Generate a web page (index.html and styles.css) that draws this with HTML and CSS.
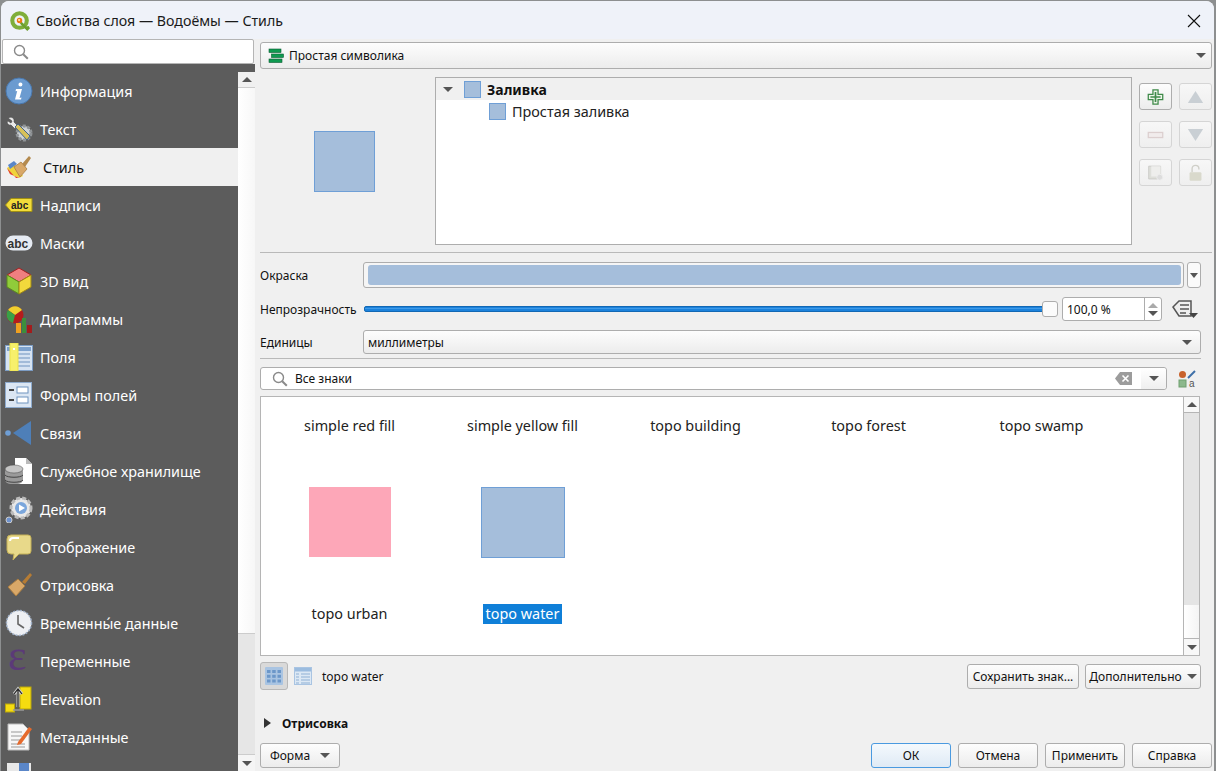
FILE: index.html
```html
<!DOCTYPE html>
<html lang="ru">
<head>
<meta charset="utf-8">
<title>Свойства слоя — Водоёмы — Стиль</title>
<link rel="stylesheet" href="styles.css">
</head>
<body>
<div class="window">
  <header class="titlebar">
    <svg class="qgis" viewBox="0 0 22 22"><circle cx="10.500" cy="10.500" r="8" fill="none" stroke="#7fae3a" stroke-width="4.500"/><path d="M12 11l6 6 2.500-.5L22 19l-3 3-8-8z" fill="#6d9f2f"/><circle cx="10.500" cy="10.500" r="3" fill="#ee7913"/><circle cx="10" cy="10" r="1.200" fill="#f5e9b0"/></svg>
    <span class="title">Свойства слоя — Водоёмы — Стиль</span>
    <svg class="close" viewBox="0 0 14 14"><path d="M1 1l12 12M13 1L1 13" stroke="#111" stroke-width="1.100" fill="none"/></svg>
  </header>
  <div class="content">
    <aside class="side">
      <div class="side-search">
        <svg class="ico-search" viewBox="0 0 16 16"><circle cx="6.500" cy="6.500" r="5" fill="none" stroke="#8a8a8a" stroke-width="1.400"/><path d="M10.200 10.200l4.600 4.600" stroke="#8a8a8a" stroke-width="2"/></svg>
      </div>
      <div class="side-body">
        <nav class="nav">
          <div class="nav-item"><svg class="nav-ico" viewBox="0 0 28 28"><circle cx="14" cy="14" r="13" fill="#6b9bd0" stroke="#4a78ad"/><path d="M15.500 5.500a2 2 0 1 1-.1 4 2 2 0 0 1 .1-4zM11 12h6l-2.500 9 2-.5-.5 2H10l2.200-8.500-1.700.2z" fill="#fff"/></svg><span>Информация</span></div>
          <div class="nav-item"><svg class="nav-ico" viewBox="0 0 28 28"><circle cx="19" cy="18" r="7" fill="#cfd3d6" stroke="#8f9396" stroke-width="3" stroke-dasharray="3 1.500"/><path d="M3 3c3-2 7 0 6 4l4 4-3 3-4-4C3 11 1 7 3 6l3 2 1-2z" fill="#e8e8e8" stroke="#444" stroke-width=".6"/><path d="M10 12l3-3 12 12-3 4z" fill="#d8c15a" stroke="#44648c"/></svg><span>Текст</span></div>
          <div class="nav-item active"><svg class="nav-ico" viewBox="0 0 28 28"><path d="M2 15l7-5 9 13-4 2-9-4z" fill="#f0d33c"/><path d="M2 15l9 10 3 0-9-4z" fill="#e33b3b"/><path d="M3 12l6-4 3 3-7 5z" fill="#5a86c8"/><path d="M17 11l7-8 2 2-6 9z" fill="#b48a4e"/><path d="M9 14l7-5 6 7-7 8z" fill="#d9a868" stroke="#a87c42" stroke-width=".8"/></svg><span>Стиль</span></div>
          <div class="nav-item"><svg class="nav-ico" viewBox="0 0 28 28"><path d="M.5 14L6 7.500h21v13H6z" fill="#f2dc3a" stroke="#a08f14"/><text x="6" y="18" class="ico-abc">abc</text></svg><span>Надписи</span></div>
          <div class="nav-item"><svg class="nav-ico" viewBox="0 0 28 28"><rect x=".5" y="6.500" width="27" height="15" rx="7.500" fill="#e6ebf3"/><text x="2.500" y="18.500" class="ico-abc dark">abc</text></svg><span>Маски</span></div>
          <div class="nav-item"><svg class="nav-ico" viewBox="0 0 28 28"><path d="M14 1l12 7-12 7L2 8z" fill="#ef7f80" stroke="#a32020"/><path d="M2 8l12 7v12L2 20z" fill="#90cc3a" stroke="#5d8a1e"/><path d="M26 8l-12 7v12l12-7z" fill="#f2d93c" stroke="#a38c14"/></svg><span>3D вид</span></div>
          <div class="nav-item"><svg class="nav-ico" viewBox="0 0 28 28"><circle cx="10" cy="10" r="8.500" fill="#b51c1c"/><path d="M10 10L3 5a8.500 8.500 0 0 1 14 0z" fill="#f0cf2e"/><path d="M10 10L3 5a8.500 8.500 0 0 0 5 13z" fill="#39a048"/><rect x="11" y="18" width="5" height="10" fill="#f0a020"/><rect x="17" y="13" width="4" height="15" fill="#3c8f3c"/><rect x="22" y="20" width="5" height="8" fill="#a31c1c"/></svg><span>Диаграммы</span></div>
          <div class="nav-item"><svg class="nav-ico" viewBox="0 0 28 28"><rect x=".5" y="2.500" width="27" height="25" fill="#d6e3f2" stroke="#7c9cc4"/><rect x="2" y="4" width="24" height="4" fill="#7ea3cf"/><path d="M13 11h12M13 15h12M13 19h12M13 23h12" stroke="#6f93bf"/><rect x="5" y="0" width="8" height="28" fill="#f7f06b" stroke="#ece24a"/><rect x="8" y="5" width="2" height="2" fill="#fff"/></svg><span>Поля</span></div>
          <div class="nav-item"><svg class="nav-ico" viewBox="0 0 28 28"><rect x=".5" y="1.500" width="26" height="25" fill="#dbe6f3" stroke="#8daacd"/><rect x="12" y="6" width="11" height="6" fill="#fff" stroke="#6f93bf"/><rect x="12" y="16" width="11" height="6" fill="#fff" stroke="#6f93bf"/><path d="M4 9h5M4 19h5" stroke="#444" stroke-width="2"/></svg><span>Формы полей</span></div>
          <div class="nav-item"><svg class="nav-ico" viewBox="0 0 28 28"><circle cx="3" cy="14" r="2.800" fill="#6f9fd6"/><path d="M8 14L26 2v24z" fill="#4e7fb8"/></svg><span>Связи</span></div>
          <div class="nav-item"><svg class="nav-ico" viewBox="0 0 28 28"><path d="M10 1h11l6 6v20H10z" fill="#fff"/><path d="M21 1v6h6z" fill="#bbb"/><rect x="0" y="10" width="18" height="17" rx="5" fill="#9a9a9a"/><ellipse cx="9" cy="12" rx="9" ry="4" fill="#c5c5c5" stroke="#444" stroke-width=".5"/><path d="M0 18c2 3 16 3 18 0M0 23c2 3 16 3 18 0" stroke="#444" fill="none"/></svg><span>Служебное хранилище</span></div>
          <div class="nav-item"><svg class="nav-ico" viewBox="0 0 28 28"><circle cx="16" cy="13" r="10" fill="#e8e8e8" stroke="#bbb" stroke-width="3" stroke-dasharray="4 2"/><circle cx="16" cy="13" r="6" fill="#7aa6dc"/><path d="M14 9.500l6 3.500-6 3.500z" fill="#fff"/><circle cx="4" cy="25" r="3" fill="#6f93cf" stroke="#ccc"/></svg><span>Действия</span></div>
          <div class="nav-item"><svg class="nav-ico" viewBox="0 0 28 28"><path d="M6 2h17a3 3 0 0 1 3 3v13a3 3 0 0 1-3 3H14l-6 6 1-6H6a4 4 0 0 1-4-4V6a4 4 0 0 1 4-4z" fill="#e8d98a" stroke="#c4b057"/><path d="M5 8c0-2 1-3 3-3h6" stroke="#fff" stroke-width="2" fill="none"/></svg><span>Отображение</span></div>
          <div class="nav-item"><svg class="nav-ico" viewBox="0 0 28 28"><path d="M17 11l8-9 2 2-7 9z" fill="#b67c34"/><path d="M3 16l10-8 7 7-9 10z" fill="#d9a868" stroke="#a87c42"/></svg><span>Отрисовка</span></div>
          <div class="nav-item"><svg class="nav-ico" viewBox="0 0 28 28"><circle cx="14" cy="14" r="12.500" fill="#eef0f4" stroke="#9fb0c8" stroke-width="1.500" stroke-dasharray="2 1.500"/><path d="M13 6v9l6 4" stroke="#666" stroke-width="1.600" fill="none"/></svg><span>Временны́е данные</span></div>
          <div class="nav-item"><svg class="nav-ico ico-visible" viewBox="0 0 28 28"><text x="3" y="23" class="ico-eps">ε</text></svg><span>Переменные</span></div>
          <div class="nav-item"><svg class="nav-ico" viewBox="0 0 28 28"><rect x="15" y="2" width="11" height="22" fill="#f5dc10" stroke="#b9a60a"/><rect x=".5" y="19" width="9" height="8" fill="#f5dc10" stroke="#b9a60a"/><path d="M8 25h11" stroke="#999" stroke-width="1.500"/><path d="M13 22V5m-4 4l4-5 4 5" stroke="#ccc" stroke-width="3" fill="none"/><path d="M13 22V5m-4 4l4-5 4 5" stroke="#222" stroke-width="1.200" fill="none"/></svg><span>Elevation</span></div>
          <div class="nav-item"><svg class="nav-ico" viewBox="0 0 28 28"><path d="M3 1h15l6 6v20H3z" fill="#f7f7f7" stroke="#bbb"/><path d="M6 9h11M6 13h11M6 17h11M6 21h14M6 24h14" stroke="#999"/><path d="M13 19l11-15 3 2-11 15-4 1z" fill="#e66a2c"/></svg><span>Метаданные</span></div>
          <div class="nav-item"><svg class="nav-ico" viewBox="0 0 28 28"><rect x="2" y="2" width="24" height="24" fill="#e8e8e8"/><rect x="14" y="2" width="10" height="8" fill="#5a86c8"/></svg><span>Зависимости</span></div>
        </nav>
        <div class="vscroll side-scroll">
          <div class="sb-btn"><i class="arrow up"></i></div>
          <div class="sb-track"></div>
          <div class="sb-thumb"></div>
          <div class="sb-btn bottom"><i class="arrow"></i></div>
        </div>
      </div>
    </aside>
    <main class="panel">
      <div class="combo renderer gradient">
        <svg class="ico16" viewBox="0 0 16 16"><rect x="1" y="1" width="12" height="3.500" fill="#0f9a50" stroke="#0c5c32" stroke-width=".6"/><rect x="3.500" y="6" width="12" height="3.500" fill="#0f9a50" stroke="#0c5c32" stroke-width=".6"/><rect x="1" y="11" width="13" height="3.500" fill="#0f9a50" stroke="#0c5c32" stroke-width=".6"/></svg>
        <span class="grow">Простая символика</span><i class="arrow"></i>
      </div>
      <section class="symbol">
        <div class="preview"><div class="swatch big"></div></div>
        <div class="tree">
          <div class="tree-row head"><i class="arrow tw"></i><span class="swatch small"></span><b>Заливка</b></div>
          <div class="tree-row child"><span class="swatch small"></span><span>Простая заливка</span></div>
        </div>
        <div class="tools">
          <button class="tool on"><svg viewBox="0 0 20 20"><path d="M7 1.500h6v5.500h5.500v6H13v5.500H7V13H1.500V7H7z" fill="#eef5ea" stroke="#3f8a4a" stroke-width="1.500"/><path d="M10 4v12M4 10h12" stroke="#3f8a4a" stroke-width="2"/></svg></button>
          <button class="tool"><svg viewBox="0 0 20 20"><path d="M10 3l9 14H1z" fill="#c9cfd4"/></svg></button>
          <button class="tool"><svg viewBox="0 0 20 20"><rect x="1.500" y="7" width="17" height="6" fill="#f1ecec" stroke="#dccfcf" stroke-width="1.500"/></svg></button>
          <button class="tool"><svg viewBox="0 0 20 20"><path d="M10 17l9-14H1z" fill="#c9cfd4"/></svg></button>
          <button class="tool"><svg viewBox="0 0 20 20"><path d="M2 2h14v15H2z" fill="#dedfda" stroke="#c8c8c4"/><path d="M5 2h11v12H5z" fill="#eeeeec"/><circle cx="15" cy="15" r="3.500" fill="#ddd" stroke="#eee"/></svg></button>
          <button class="tool"><svg viewBox="0 0 20 20"><path d="M6 9V5a4 4 0 0 1 8 0v1" fill="none" stroke="#cfcfc8" stroke-width="1.600"/><rect x="3" y="9" width="14" height="10" rx="1.500" fill="#d9d9cc"/></svg></button>
        </div>
      </section>
      <div class="rule"></div>
      <div class="form-row color-row">
        <label>Окраска</label>
        <div class="colorbtn"><div class="colorfill"></div></div>
        <div class="colordrop"><i class="arrow"></i></div>
      </div>
      <div class="form-row opacity-row">
        <label class="lbl-auto">Непрозрачность</label>
        <div class="slider"><div class="slider-fill"></div><div class="slider-knob"></div></div>
        <div class="spin"><span class="grow">100,0 %</span><div class="spin-btns"><i class="arrow up grey"></i><i class="arrow"></i></div></div>
        <svg class="dd" viewBox="0 0 26 20"><path d="M1 8L7 2h12v15H7z" fill="#eee" stroke="#555" stroke-width="1.500"/><path d="M8 6h9M8 10h9M8 14h6" stroke="#555" stroke-width="1.500"/><path d="M17 14h9l-4.500 5z" fill="#444"/></svg>
      </div>
      <div class="form-row units-row">
        <label>Единицы</label>
        <div class="combo units gradient"><span class="grow">миллиметры</span><i class="arrow"></i></div>
      </div>
      <div class="rule thin"></div>
      <div class="lib-search">
        <div class="searchbox">
          <svg class="ico-search s2" viewBox="0 0 16 16"><circle cx="6.500" cy="6.500" r="5" fill="none" stroke="#8a8a8a" stroke-width="1.400"/><path d="M10.200 10.200l4.600 4.600" stroke="#8a8a8a" stroke-width="2"/></svg>
          <span class="grow">Все знаки</span>
          <svg class="clear" viewBox="0 0 17 13"><path d="M0 6.500L5 0h12v13H5z" fill="#9c9c9c"/><path d="M7.500 3.500l6 6M13.500 3.500l-6 6" stroke="#fff" stroke-width="1.600"/></svg>
          <div class="search-drop"><i class="arrow"></i></div>
        </div>
        <svg class="style-ico" viewBox="0 0 20 20"><circle cx="5.500" cy="5.500" r="3.500" fill="#c8622c"/><path d="M11 9l7-7" stroke="#3e6fa8" stroke-width="2"/><rect x="2" y="11" width="7" height="7" fill="#8cb88c" stroke="#6f9f6f"/><text x="12" y="18" class="ico-a">a</text></svg>
      </div>
      <div class="list">
        <div class="cells">
          <div class="cell"><span class="cap">simple red fill</span></div>
          <div class="cell"><span class="cap">simple yellow fill</span></div>
          <div class="cell"><span class="cap">topo building</span></div>
          <div class="cell"><span class="cap">topo forest</span></div>
          <div class="cell"><span class="cap">topo swamp</span></div>
          <div class="cell tall"><div class="sym pink"></div><span class="cap">topo urban</span></div>
          <div class="cell tall"><div class="sym water"></div><span class="cap sel">topo water</span></div>
        </div>
        <div class="vscroll list-scroll">
          <div class="sb-btn"><i class="arrow up"></i></div>
          <div class="sb-track list-thumb"></div>
          <div class="sb-trough"></div>
          <div class="sb-btn bottom"><i class="arrow"></i></div>
        </div>
      </div>
      <div class="lib-foot">
        <button class="viewbtn on"><svg viewBox="0 0 18 18"><rect width="18" height="18" rx="1" fill="#a9c4e2"/><g fill="#6c97c9"><rect x="2" y="3" width="3.500" height="3"/><rect x="7.200" y="3" width="3.500" height="3"/><rect x="12.500" y="3" width="3.500" height="3"/><rect x="2" y="7.800" width="3.500" height="3"/><rect x="7.200" y="7.800" width="3.500" height="3"/><rect x="12.500" y="7.800" width="3.500" height="3"/><rect x="2" y="12.500" width="3.500" height="3"/><rect x="7.200" y="12.500" width="3.500" height="3"/><rect x="12.500" y="12.500" width="3.500" height="3"/></g></svg></button>
        <button class="viewbtn"><svg viewBox="0 0 18 18"><rect x=".5" y=".5" width="17" height="17" fill="#dce8f4" stroke="#a9c4e2"/><rect x="1" y="1" width="16" height="3.500" fill="#9bbcdf"/><path d="M2 7h3M7 7h9M2 10h3M7 10h9M2 13h3M7 13h9M2 16h3M7 16h9" stroke="#8fb0d4"/></svg></button>
        <span class="grow name">topo water</span>
        <button class="btn save">Сохранить знак...</button>
        <button class="btn more">Дополнительно<i class="arrow"></i></button>
      </div>
      <div class="section"><i class="tri"></i><b>Отрисовка</b></div>
      <div class="bottom-bar">
        <button class="btn forma">Форма<i class="arrow"></i></button>
        <span class="grow"></span>
        <button class="btn wide ok">ОК</button>
        <button class="btn wide">Отмена</button>
        <button class="btn wide">Применить</button>
        <button class="btn wide">Справка</button>
      </div>
    </main>
  </div>
</div>
</body>
</html>
```
FILE: styles.css
```css
* { box-sizing: border-box; }
html, body { margin: 0; height: 100%; overflow: hidden; }
body {
  background: #8d8f90;
  padding: 1px 2px 0 1px;
  font-family: "Noto Sans", "Open Sans", sans-serif;
  font-size: 12px;
  color: #111;
}
.window {
  height: 770px;
  background: #f0f0f0;
  border-radius: 8px 8px 0 0;
  overflow: hidden;
  display: flex;
  flex-direction: column;
}
.titlebar {
  height: 38px;
  flex: none;
  background: #eff2f9;
  display: flex;
  align-items: center;
  padding: 1px 0 0 9px;
}
.qgis { width: 20px; height: 20px; margin-right: 6px; }
.title { flex: 1; font-size: 14.2px; color: #1a1a1a; }
.close { width: 14px; height: 14px; margin-right: 13px; }
.content { flex: 1; display: flex; min-height: 0; }
.grow { flex: 1; }

/* sidebar */
.side { width: 254px; flex: none; display: flex; flex-direction: column; min-height: 0; }
.side-search {
  height: 25px; margin: 0 1px 0 1px;
  background: #fff; border: 1px solid #b5b5b5; border-radius: 2px;
  display: flex; align-items: center; padding-left: 10px; flex: none;
}
.ico-search { width: 16px; height: 16px; }
.side-body { flex: 1; display: flex; min-height: 0; background: #5c5c5c; }
.nav { width: 237px; flex: none; padding-top: 8px; overflow: hidden; height: 100%; }
.nav-item {
  height: 38px; display: flex; align-items: center;
  padding-left: 4px; gap: 7px;
  color: #fff; font-size: 14.35px;
}
.nav-item.active { background: #f0f0f0; color: #111; }
.nav-item.active span { margin-left: 3px; }
.nav-ico { width: 28px; height: 28px; flex: none; }
.ico-visible { overflow: visible; }
.ico-abc { font: bold 10px "Liberation Sans", sans-serif; fill: #222; }
.ico-abc.dark { font-size: 12px; fill: #333; }
.ico-eps { font: 44px "Liberation Serif", serif; fill: #5b3a78; }
.ico-a { font: 10px "Liberation Sans", sans-serif; fill: #555; }

/* scrollbars */
.vscroll { flex: none; width: 17px; display: flex; flex-direction: column; background: #fff; }
.side-scroll { margin-top: 8px; }
.sb-btn { height: 16px; flex: none; display: flex; align-items: center; justify-content: center; background: #f0f0f0; border-bottom: 1px solid #ccc; }
.sb-btn.bottom { border-bottom: 0; border-top: 1px solid #ccc; height: 17px; background: #f5f5f5; }
.sb-track { height: 545px; flex: none; background: linear-gradient(90deg, #fff, #f7f7f7); }
.sb-thumb { flex: 1; background: #e6e6e6; border-top: 1px solid #ccc; }

/* arrows */
.arrow { display: block; flex: none; width: 0; height: 0; border-left: 5px solid transparent; border-right: 5px solid transparent; border-top: 5px solid #555; }
.arrow.up { border-top: 0; border-bottom: 5px solid #555; }
.arrow.grey { border-bottom-color: #aaa; }
.tri { display: block; width: 0; height: 0; border-top: 5px solid transparent; border-bottom: 5px solid transparent; border-left: 7px solid #333; margin-right: 11px; }

/* main panel */
.panel { flex: 1; min-width: 0; padding: 3px 2px 0 5px; display: flex; flex-direction: column; }
.gradient { background: linear-gradient(#fdfdfd, #ececec); }
.combo { display: flex; align-items: center; border: 1px solid #adadad; border-radius: 3px; }
.renderer { height: 27px; padding: 0 5px 0 7px; gap: 5px; flex: none; }
.ico16 { width: 16px; height: 16px; }
.symbol { height: 168px; flex: none; margin-top: 8px; display: flex; }
.preview { width: 175px; flex: none; display: flex; align-items: center; justify-content: center; padding-right: 7px; padding-top: 1px; }
.swatch { display: block; background: #a5bedb; border: 1px solid #6f9fd6; flex: none; }
.swatch.big { width: 61px; height: 61px; }
.swatch.small { width: 17px; height: 17px; }
.tree { width: 697px; flex: none; background: #fff; border: 1px solid #adadad; font-size: 14.4px; }
.tree-row { display: flex; align-items: center; height: 22px; }
.tree-row.head { background: #f0f0f0; padding-left: 7px; }
.tree-row.head b { margin-left: 6px; font-size: 14px; }
.tw { margin-right: 11px; }
.tree-row.child { padding-left: 53px; gap: 6px; color: #222; }
.tools { margin-left: 7px; display: grid; grid-template-columns: 33px 33px; grid-auto-rows: 27px; column-gap: 7px; row-gap: 11px; padding-top: 6px; align-content: start; }
.tool { padding: 4px 7px; border: 1px solid #d5d5d5; border-radius: 3px; background: linear-gradient(#f7f7f7, #efefef); display: flex; align-items: center; justify-content: center; }
.tool.on { border-color: #adadad; background: linear-gradient(#fdfdfd, #ececec); }
.tool svg { width: 18px; height: 18px; }
.rule { height: 1px; flex: none; background: #b9b9b9; margin-top: 7px; }
.rule.thin { margin-top: 3px; width: 941px; }
.form-row { display: flex; align-items: center; flex: none; height: 26px; }
.form-row label { width: 103px; flex: none; }
.color-row { margin-top: 9px; }
.colorbtn { width: 821px; height: 26px; flex: none; border: 1px solid #adadad; border-radius: 3px; background: #f5f5f5; padding: 2px 2px 2px 4px; }
.colorfill { height: 100%; background: #a5bedb; border-radius: 3px; }
.colordrop { width: 14px; height: 26px; margin-left: 3px; flex: none; border: 1px solid #adadad; border-radius: 3px; background: #fafafa; display: flex; align-items: center; justify-content: center; }
.colordrop .arrow { border-left-width: 4px; border-right-width: 4px; }
.opacity-row { margin-top: 9px; height: 24px; }
.opacity-row .lbl-auto { width: 104px; }
.slider { position: relative; width: 687px; height: 6px; flex: none; background: #1b82dc; border: 1px solid #1268b4; border-radius: 2px; }
.slider-fill { height: 1px; margin-top: 1px; background: #3f9ae8; }
.slider-knob { position: absolute; right: -8px; top: -6px; width: 16px; height: 16px; background: #fbfbfb; border: 1px solid #adadad; border-radius: 3px; }
.spin { margin-left: 11px; width: 100px; height: 24px; flex: none; border: 1px solid #adadad; border-radius: 3px; background: #fff; display: flex; align-items: center; padding-left: 4px; }
.spin-btns { width: 17px; height: 100%; border-left: 1px solid #adadad; display: flex; flex-direction: column; justify-content: center; align-items: center; gap: 3px; }
.dd { width: 26px; height: 20px; margin-left: 10px; flex: none; }
.units-row { margin-top: 8px; }
.units { width: 838px; height: 24px; padding: 0 8px 0 4px; flex: none; }
.lib-search { display: flex; align-items: center; flex: none; height: 23px; margin-top: 8px; }
.searchbox { width: 907px; height: 23px; border: 1px solid #adadad; border-radius: 3px; background: #fff; display: flex; align-items: center; padding-left: 11px; }
.s2 { margin-right: 7px; }
.clear { width: 17px; height: 13px; margin-right: 9px; }
.search-drop { width: 25px; height: 100%; background: linear-gradient(#fff, #efefef); display: flex; align-items: center; justify-content: center; border-radius: 0 3px 3px 0; }
.style-ico { width: 20px; height: 20px; margin-left: 10px; }
.list { height: 260px; width: 940px; flex: none; margin-top: 6px; border: 1px solid #b5b5b5; background: #fff; display: flex; font-size: 14.4px; }
.cells { flex: 1; display: grid; grid-template-columns: repeat(5, 173px); grid-template-rows: 39px 188px; align-content: start; padding-left: 2px; }
.cell { display: flex; flex-direction: column; align-items: center; justify-content: flex-end; color: #222; }
.cell.tall { justify-content: flex-start; padding-top: 51px; }
.cap { line-height: 20px; height: 20px; padding: 0 3px; }
.cell .sel { background: #0f7fd8; color: #fff; margin-top: 46px; }
.cell.tall .cap:not(.sel) { margin-top: 46px; }
.sym { width: 84px; height: 71px; flex: none; }
.pink { background: #fda7b8; width: 82px; border-bottom: 1px solid #fff; }
.water { background: #a5bedb; border: 1px solid #6f9fd6; }
.list-scroll { width: 16px; border-left: 1px solid #b5b5b5; }
.list-scroll .sb-btn { background: #f8f8f8; border-color: #b5b5b5; }
.list-thumb { height: 192px; background: #e4e4e4; }
.sb-trough { flex: 1; background: linear-gradient(90deg, #fff, #f4f4f4); }
.lib-foot { display: flex; align-items: center; flex: none; height: 28px; margin-top: 6px; }
.viewbtn { width: 28px; height: 28px; padding: 4px; border: 0; background: none; border-radius: 3px; margin-right: 2px; }
.viewbtn.on { background: #d9d9d9; border: 1px solid #b8b8b8; }
.viewbtn svg { width: 18px; height: 18px; display: block; }
.name { margin-left: 2px; }
button { font: inherit; color: inherit; }
.btn { height: 25px; border: 1px solid #adadad; border-radius: 3px; background: linear-gradient(#fdfdfd, #ececec); padding: 0 3px; display: flex; align-items: center; justify-content: center; }
.save { width: 112px; }
.more { gap: 5px; width: 116px; margin-left: 6px; margin-right: 11px; }
.section { flex: none; margin-top: 26px; height: 14px; display: flex; align-items: center; padding-left: 4px; font-size: 12px; }
.bottom-bar { display: flex; align-items: center; flex: none; margin-top: 13px; height: 25px; }
.forma { width: 80px; gap: 10px; }
.wide { width: 80px; margin-left: 7px; }
.ok { background: linear-gradient(#f4f9fd, #dfeaf5); border-color: #4a9ae0; }
```
